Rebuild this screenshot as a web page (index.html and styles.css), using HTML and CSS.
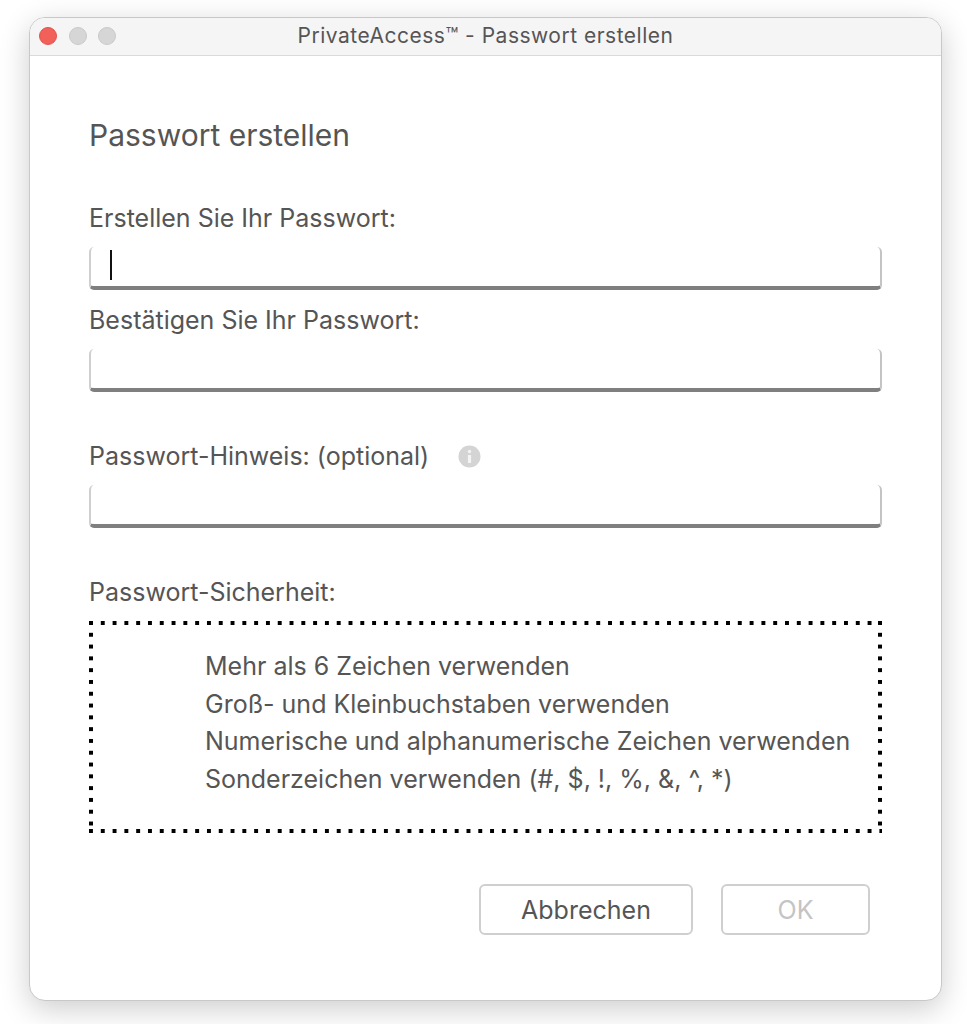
FILE: index.html
```html
<!DOCTYPE html>
<html lang="de">
<head>
    <meta charset="utf-8">
    <title>PrivateAccess - Passwort erstellen</title>
    <link rel="stylesheet" href="styles.css">
</head>
<body>
<div class="window">
    <div class="titlebar">
        <div class="lights">
            <span class="light light-close"></span>
            <span class="light"></span>
            <span class="light"></span>
        </div>
        <div class="title">PrivateAccess™ - Passwort erstellen</div>
    </div>
    <div class="content">
        <h1 class="heading">Passwort erstellen</h1>

        <div class="label label-first">Erstellen Sie Ihr Passwort:</div>
        <div class="field"><span class="caret"></span></div>

        <div class="label label-second">Bestätigen Sie Ihr Passwort:</div>
        <div class="field"></div>

        <div class="label label-hint">
            Passwort-Hinweis: (optional)
            <svg class="info" width="23" height="23" viewBox="0 0 23 23">
                <circle cx="11.5" cy="11.5" r="11" fill="#d4d4d4"/>
                <circle cx="11.5" cy="6.5" r="1.7" fill="#f4f4f4"/>
                <rect x="9.9" y="10" width="3.2" height="8" fill="#f4f4f4"/>
            </svg>
        </div>
        <div class="field"></div>

        <div class="label label-strength">Passwort-Sicherheit:</div>
        <div class="strength">
            <div>Mehr als 6 Zeichen verwenden</div>
            <div>Groß- und Kleinbuchstaben verwenden</div>
            <div>Numerische und alphanumerische Zeichen verwenden</div>
            <div>Sonderzeichen verwenden (#, $, !, %, &amp;, ^, *)</div>
        </div>

        <div class="buttons">
            <button class="button button-cancel">Abbrechen</button>
            <button class="button button-ok" disabled>OK</button>
        </div>
    </div>
</div>
</body>
</html>
```

FILE: styles.css
```css
* {
    box-sizing: border-box;
}

body {
    margin: 0;
    height: 1024px;
    background-color: #fff;
    overflow: hidden;
    font-family: "Inter", "Liberation Sans", sans-serif;
    color: #555;
}

.window {
    width: 913px;
    height: 984px;
    margin: 17px 0 0 29px;
    background-color: #fff;
    border: 1px solid #c8c8c8;
    border-radius: 16px;
    box-shadow: 0 8px 30px rgba(0, 0, 0, 0.2);
    overflow: hidden;
}

.titlebar {
    position: relative;
    display: flex;
    align-items: center;
    justify-content: center;
    height: 38px;
    padding-bottom: 2px;
    background-color: #f5f5f5;
    border-bottom: 1px solid #d9d9d9;
}

.lights {
    position: absolute;
    left: 9px;
    top: 9px;
    display: flex;
    gap: 11.5px;
}

.light {
    width: 18px;
    height: 18px;
    border-radius: 50%;
    background-color: #d6d6d6;
    border: 1px solid #c9c9c9;
}

.light-close {
    background-color: #f2605a;
    border-color: #e0534d;
}

.title {
    font-size: 21px;
    color: #555;
    letter-spacing: 0.5px;
}

.content {
    padding: 0 59px;
}

.heading {
    margin: 61px 0 0;
    font-size: 30px;
    line-height: 36px;
    font-weight: 400;
}

.label {
    font-size: 25px;
    line-height: 30px;
}

.label-first {
    margin-top: 50px;
}

.label-second {
    margin-top: 15px;
}

.label-hint {
    display: flex;
    align-items: center;
    gap: 29px;
    margin-top: 49px;
}

.label-strength {
    margin-top: 49px;
}

.field {
    display: flex;
    align-items: center;
    height: 43px;
    margin-top: 14px;
    padding-left: 19px;
    border-left: 2px solid #cfcfcf;
    border-right: 2px solid #c4c4c4;
    border-bottom: 4px solid #7f7f7f;
    border-radius: 5px;
}

.caret {
    width: 2px;
    height: 30px;
    margin-bottom: 3px;
    background-color: #111;
}

.strength {
    height: 212px;
    margin-top: 14px;
    padding: 27px 0 0 116px;
    font-size: 25px;
    line-height: 37.5px;
    background:
        linear-gradient(to right, #000 4px, transparent 4px) 0 0 / 11.8px 4px repeat-x,
        linear-gradient(to right, #000 4px, transparent 4px) 0 100% / 11.8px 4px repeat-x,
        linear-gradient(to bottom, #000 4px, transparent 4px) 0 0 / 4px 11.8px repeat-y,
        linear-gradient(to bottom, #000 4px, transparent 4px) 100% 0 / 4px 11.8px repeat-y;
}

.buttons {
    display: flex;
    justify-content: flex-end;
    gap: 28px;
    margin-top: 51px;
    padding-right: 12px;
}

.button {
    height: 51px;
    background-color: #fff;
    border: 2px solid #cfcfcf;
    border-radius: 6px;
    font-family: inherit;
    font-size: 25px;
}

.button-cancel {
    width: 214px;
    color: #555;
}

.button-ok {
    width: 149px;
    color: #c4c4c4;
}
```
